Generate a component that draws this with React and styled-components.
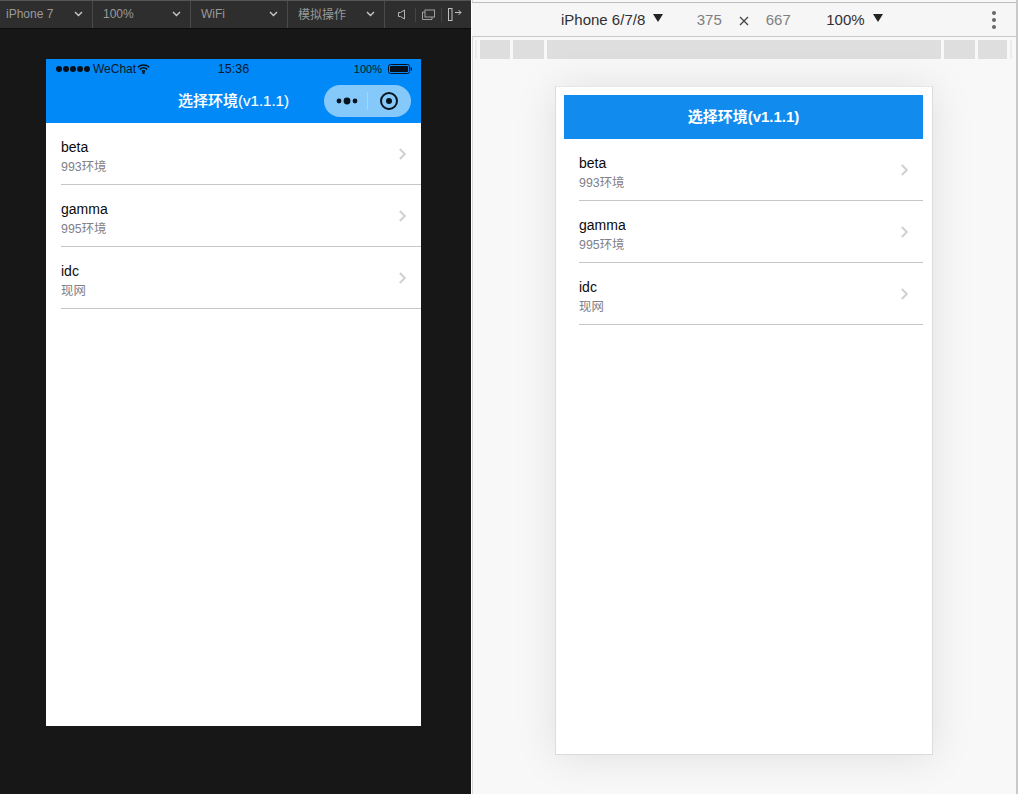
import React from "react";
import styled, { createGlobalStyle } from "styled-components";

const FONT = '"Liberation Sans", "Noto Sans CJK SC", Arial, sans-serif';

const Global = createGlobalStyle`
  html, body { margin: 0; padding: 0; background: #f8f8f8; }
  #root { width: 1018px; height: 794px; overflow: hidden; }
  * { box-sizing: border-box; }
`;

const Shell = styled.div`
  display: flex;
  width: 1018px;
  height: 794px;
  font-family: ${FONT};
`;

/* ---------- left: simulator ---------- */
const SimPane = styled.section`
  width: 471px;
  height: 794px;
  flex: none;
  background: #171717;
  display: flex;
  flex-direction: column;
  align-items: flex-start;
`;

const SimToolbar = styled.div`
  width: 100%;
  height: 29px;
  flex: none;
  display: flex;
  background: #2e2e2e;
  border-top: 1px solid #555;
  border-bottom: 1px solid #0c0c0c;
`;

const SimSelect = styled.div`
  width: ${(p) => p.$width}px;
  flex: none;
  display: flex;
  align-items: center;
  justify-content: space-between;
  padding: 0 9px 2px ${(p) => p.$indent || 6}px;
  border-right: 1px solid #4a4a4a;
  color: #9a9a9a;
  font-size: 12px;
`;

const SimTools = styled.div`
  flex: 1;
  display: flex;
  align-items: center;
  padding-left: 13px;
  color: #aaa;
`;

const ToolDivider = styled.span`
  width: 1px;
  height: 14px;
  background: #454545;
  margin: ${(p) => p.$margin};
`;

const PhoneFrame = styled.div`
  width: 375px;
  height: 667px;
  margin: 30px 0 0 46px;
  background: #fff;
  display: flex;
  flex-direction: column;
`;

const StatusBar = styled.div`
  height: 20px;
  flex: none;
  background: #0089f7;
  color: #08182a;
  display: grid;
  grid-template-columns: 1fr auto 1fr;
  align-items: center;
  padding: 0 9px 0 10px;
  font-size: 12px;
`;

const StatusLeft = styled.div`
  display: flex;
  align-items: center;
  gap: 1px;
`;

const Dots = styled.div`
  display: flex;
  gap: 1px;
  margin-right: 2px;
`;

const Dot = styled.span`
  width: 6px;
  height: 6px;
  border-radius: 50%;
  background: #05101c;
`;

const StatusTime = styled.span`
  font-size: 12.5px;
  margin-left: -1px;
`;

const StatusRight = styled.div`
  display: flex;
  align-items: center;
  justify-content: flex-end;
  gap: 6px;
  font-size: 11px;
`;

const NavBar = styled.header`
  height: 44px;
  flex: none;
  background: #0089f7;
  display: grid;
  grid-template-columns: 1fr auto 1fr;
  align-items: center;
  padding: 0 10px;
`;

const NavTitle = styled.h1`
  grid-column: 2;
  margin: 0 0 3px;
  color: #fff;
  font-size: 15px;
  font-weight: 500;
  white-space: nowrap;
  -webkit-text-stroke: 0.15px #fff;
`;

const Capsule = styled.div`
  grid-column: 3;
  justify-self: end;
  width: 87px;
  height: 32px;
  border-radius: 16px;
  background: #85c9fb;
  display: flex;
  align-items: center;
  color: #07121c;
`;

const CapsuleCell = styled.div`
  width: 43px;
  flex: none;
  height: 100%;
  display: flex;
  align-items: center;
  justify-content: center;
  padding: 0 ${(p) => p.$right || 0}px 0 ${(p) => p.$left || 0}px;
`;

const CapsuleDivider = styled.span`
  width: 1px;
  height: 18px;
  background: #a4d6fb;
`;

/* ---------- list (shared) ---------- */
const List = styled.ul`
  list-style: none;
  margin: 0;
  padding: 0;
`;

const Row = styled.li`
  height: 62px;
  margin-left: 15px;
  display: flex;
  align-items: center;
  justify-content: space-between;
  padding: 2px 14px 1px 0;
  border-bottom: 1px solid #c6c6c8;
`;

const RowText = styled.div`
  display: flex;
  flex-direction: column;
  gap: 5px;
  margin-top: 5px;
`;

const RowTitle = styled.div`
  font-size: 14px;
  line-height: 16px;
  color: #0a0a0a;
`;

const RowSub = styled.div`
  font-size: 12.4px;
  line-height: 14px;
  color: #808087;
`;

const Chevron = styled.svg`
  display: block;
  color: #d0d0d4;
`;

/* ---------- right: devtools device mode ---------- */
const DevPane = styled.section`
  flex: 1;
  height: 794px;
  background: #f8f8f8;
  border-left: 1px solid #fff;
  border-right: 2px solid #c9c9c9;
  display: flex;
  flex-direction: column;
  align-items: flex-start;
  box-shadow: inset 1px 0 0 #d6d6d6;
`;

const DevToolbar = styled.div`
  width: 100%;
  height: 35px;
  margin-top: 2px;
  flex: none;
  background: #f6f6f6;
  border-top: 1px solid #bdbdbd;
  border-bottom: 1px solid #c8c8c8;
  display: flex;
  align-items: center;
  font-size: 15px;
  color: #303030;
  padding-left: 89px;
`;

const Caret = styled.span`
  width: 0;
  height: 0;
  margin-left: 8px;
  margin-top: -3px;
  border-left: 5px solid transparent;
  border-right: 5px solid transparent;
  border-top: 8px solid #222;
`;

const DimValue = styled.span`
  color: #808080;
  width: 28px;
  text-align: center;
  margin-left: ${(p) => p.$left || 0}px;
`;

const Times = styled.svg`
  margin: 2px 15px 0 16px;
  color: #444;
`;

const PercentLabel = styled.span`
  margin-left: 34px;
`;

const Kebab = styled.div`
  margin-left: auto;
  margin-right: 20px;
  display: flex;
  flex-direction: column;
  gap: 3px;
`;

const KebabDot = styled.span`
  width: 4px;
  height: 4px;
  border-radius: 50%;
  background: #666;
`;

const Ruler = styled.div`
  width: 100%;
  height: 19px;
  margin-top: 3px;
  flex: none;
  display: flex;
  gap: 3px;
  padding-left: 3px;
`;

const RulerBlock = styled.span`
  width: ${(p) => p.$w}px;
  height: 100%;
  background: ${(p) => (p.$light ? "#ececec" : "#dedede")};
`;

const DevPage = styled.div`
  width: 378px;
  height: 669px;
  margin: 27px 0 0 83px;
  background: #fff;
  border: 1px solid #dcdcdc;
  border-top-color: #e6e6e6;
  box-shadow: 0 2px 40px rgba(0, 0, 0, 0.1);
  padding: 8px 9px 0 8px;
`;

const DevHeader = styled.header`
  height: 44px;
  background: #118bee;
  display: flex;
  align-items: center;
  justify-content: center;
`;

const DevTitle = styled.h1`
  margin: 0 0 3px;
  color: #fff;
  font-size: 15px;
  font-weight: 700;
  white-space: nowrap;
`;

const items = [
  { name: "beta", sub: "993环境" },
  { name: "gamma", sub: "995环境" },
  { name: "idc", sub: "现网" },
];

const ChevronIcon = () => (
  <Chevron width="9" height="14" viewBox="0 0 9 14" fill="none">
    <path d="M1.8 2 6.8 7 1.8 12" stroke="currentColor" strokeWidth="2" />
  </Chevron>
);

const EnvList = () => (
  <List>
    {items.map((it) => (
      <Row key={it.name}>
        <RowText>
          <RowTitle>{it.name}</RowTitle>
          <RowSub>{it.sub}</RowSub>
        </RowText>
        <ChevronIcon />
      </Row>
    ))}
  </List>
);

const SelectChevron = () => (
  <svg width="9" height="6" viewBox="0 0 9 6" fill="none">
    <path d="M1 1l3.5 3.5L8 1" stroke="#c8c8c8" strokeWidth="1.4" />
  </svg>
);

const Wifi = () => (
  <svg width="13" height="10" viewBox="0 0 13 10" fill="none" stroke="#05101c" strokeWidth="1.5">
    <path d="M.8 3.2C4 .4 9 .4 12.2 3.2" />
    <path d="M2.8 5.3c2.1-1.7 5.3-1.7 7.4 0" />
    <path d="M4.9 7.4c1-.7 2.2-.7 3.2 0" />
    <circle cx="6.5" cy="9" r=".5" fill="#05101c" />
  </svg>
);

const Battery = () => (
  <svg width="24" height="10" viewBox="0 0 24 10">
    <rect x=".5" y=".5" width="21" height="9" rx="2" fill="none" stroke="#05101c" />
    <rect x="2" y="2" width="18" height="6" rx=".8" fill="#05101c" />
    <rect x="22.6" y="3.4" width="1.4" height="3.2" fill="#05101c" />
  </svg>
);

export default function App() {
  return (
    <Shell>
      <Global />
      <SimPane>
        <SimToolbar>
          <SimSelect $width={93}>iPhone 7<SelectChevron /></SimSelect>
          <SimSelect $width={98} $indent={10}>100%<SelectChevron /></SimSelect>
          <SimSelect $width={97} $indent={10}>WiFi<SelectChevron /></SimSelect>
          <SimSelect $width={97} $indent={10}>模拟操作<SelectChevron /></SimSelect>
          <SimTools>
            <svg width="7" height="11" viewBox="0 0 7 11" fill="none" stroke="#b5b5b5">
              <path d="M.5 3.5h2L6.5 1v9l-4-2.5h-2z" />
            </svg>
            <ToolDivider $margin="0 6px 0 10px" />
            <svg width="13" height="11" viewBox="0 0 13 11" fill="none" stroke="#a0a0a0">
              <rect x="3" y="1" width="9.5" height="7" />
              <path d="M3 3H.5v7.5h9.5V8" />
            </svg>
            <ToolDivider $margin="0 6px 0 6px" />
            <svg width="14" height="13" viewBox="0 0 14 13" fill="none" stroke="#c0c0c0">
              <rect x=".5" y=".5" width="3.5" height="12" />
              <path d="M7 4.5h6M10.5 2l2.5 2.5L10.5 7" />
            </svg>
          </SimTools>
        </SimToolbar>
        <PhoneFrame>
          <StatusBar>
            <StatusLeft>
              <Dots>
                {[0, 1, 2, 3, 4].map((i) => <Dot key={i} />)}
              </Dots>
              <span>WeChat</span>
              <Wifi />
            </StatusLeft>
            <StatusTime>15:36</StatusTime>
            <StatusRight>
              <span>100%</span>
              <Battery />
            </StatusRight>
          </StatusBar>
          <NavBar>
            <NavTitle>选择环境(v1.1.1)</NavTitle>
            <Capsule>
              <CapsuleCell $left={2}>
                <svg width="22" height="8" viewBox="0 0 22 8" fill="#07121c">
                  <circle cx="3" cy="4" r="2.4" />
                  <circle cx="11" cy="4" r="3.4" />
                  <circle cx="19" cy="4" r="2.4" />
                </svg>
              </CapsuleCell>
              <CapsuleDivider />
              <CapsuleCell $right={1}>
                <svg width="20" height="20" viewBox="0 0 20 20" fill="none">
                  <circle cx="10" cy="10" r="8" stroke="#07121c" strokeWidth="2" />
                  <circle cx="10" cy="10" r="3" fill="#07121c" />
                </svg>
              </CapsuleCell>
            </Capsule>
          </NavBar>
          <EnvList />
        </PhoneFrame>
      </SimPane>
      <DevPane>
        <DevToolbar>
          iPhone 6/7/8<Caret />
          <DimValue $left={32}>375</DimValue>
          <Times width="10" height="10" viewBox="0 0 10 10" fill="none">
            <path d="M1 1l8 8M9 1l-8 8" stroke="currentColor" strokeWidth="1.3" />
          </Times>
          <DimValue>667</DimValue>
          <PercentLabel>100%</PercentLabel><Caret />
          <Kebab>
            <KebabDot /><KebabDot /><KebabDot />
          </Kebab>
        </DevToolbar>
        <Ruler>
          <RulerBlock $w={2} $light />
          <RulerBlock $w={30} />
          <RulerBlock $w={31} />
          <RulerBlock $w={394} />
          <RulerBlock $w={31} />
          <RulerBlock $w={29} />
          <RulerBlock $w={2} $light />
        </Ruler>
        <DevPage>
          <DevHeader>
            <DevTitle>选择环境(v1.1.1)</DevTitle>
          </DevHeader>
          <EnvList />
        </DevPage>
      </DevPane>
    </Shell>
  );
}
